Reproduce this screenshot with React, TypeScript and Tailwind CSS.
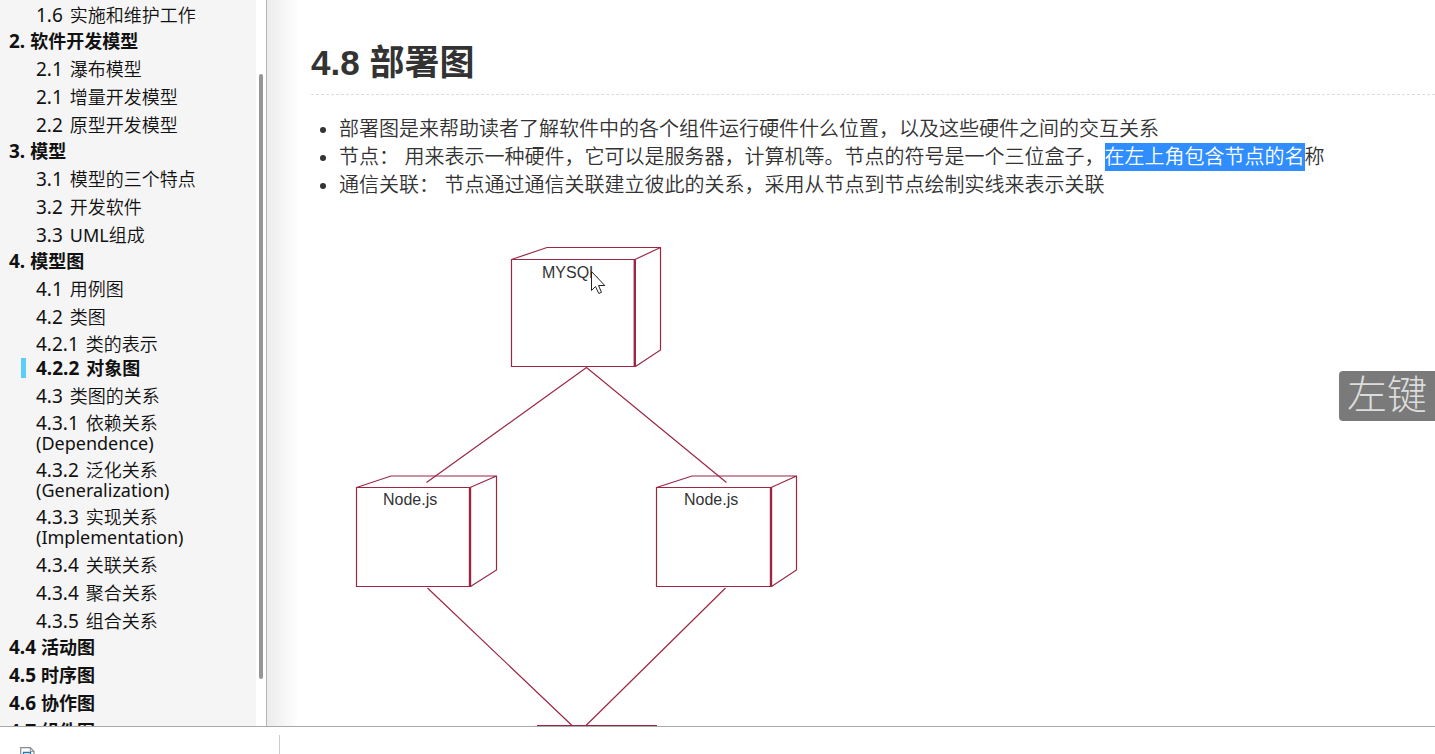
import React from 'react';

type Kind = 'chapter' | 'chapterAfterList' | 'section' | 'topic' | 'active';

interface Entry {
  no: string;
  title: string;
  latin?: string;
  note?: string;
  kind: Kind;
}

const entries: Entry[] = [
  { no: '1.6', title: '实施和维护工作', kind: 'section' },
  { no: '2.', title: '软件开发模型', kind: 'chapterAfterList' },
  { no: '2.1', title: '瀑布模型', kind: 'section' },
  { no: '2.1', title: '增量开发模型', kind: 'section' },
  { no: '2.2', title: '原型开发模型', kind: 'section' },
  { no: '3.', title: '模型', kind: 'chapterAfterList' },
  { no: '3.1', title: '模型的三个特点', kind: 'section' },
  { no: '3.2', title: '开发软件', kind: 'section' },
  { no: '3.3', latin: 'UML', title: '组成', kind: 'section' },
  { no: '4.', title: '模型图', kind: 'chapterAfterList' },
  { no: '4.1', title: '用例图', kind: 'section' },
  { no: '4.2', title: '类图', kind: 'section' },
  { no: '4.2.1', title: '类的表示', kind: 'topic' },
  { no: '4.2.2', title: '对象图', kind: 'active' },
  { no: '4.3', title: '类图的关系', kind: 'section' },
  { no: '4.3.1', title: '依赖关系', note: '(Dependence)', kind: 'topic' },
  { no: '4.3.2', title: '泛化关系', note: '(Generalization)', kind: 'topic' },
  { no: '4.3.3', title: '实现关系', note: '(Implementation)', kind: 'topic' },
  { no: '4.3.4', title: '关联关系', kind: 'section' },
  { no: '4.3.4', title: '聚合关系', kind: 'section' },
  { no: '4.3.5', title: '组合关系', kind: 'section' },
  { no: '4.4', title: '活动图', kind: 'chapterAfterList' },
  { no: '4.5', title: '时序图', kind: 'chapter' },
  { no: '4.6', title: '协作图', kind: 'chapter' },
  { no: '4.7', title: '组件图', kind: 'chapter' },
];

const kindClass: Record<Kind, string> = {
  chapter: 'mt-2 pl-[9px] font-bold',
  chapterAfterList: 'mt-1.5 pl-[9px] font-bold',
  section: 'mt-2 pl-9 font-[350]',
  topic: 'mt-[7px] pl-9 font-[350]',
  active: 'mt-1 ml-[21px] border-l-[5px] border-[#5bcdfa] pl-2.5 font-bold',
};

const numberClass: Record<Kind, string> = {
  chapter: '',
  chapterAfterList: '',
  section: 'mr-0.5 font-normal',
  topic: 'mr-0.5 font-normal',
  active: 'mr-0.5',
};

function Sidebar() {
  return (
    <aside className="flex w-[267px] shrink-0 overflow-hidden border-r border-[#b4b4b4] bg-white">
      <nav aria-label="目录" className="min-w-0 flex-1 bg-[#f5f5f5]">
        <ul className="-mt-[3px] font-['Noto_Sans','Noto_Sans_CJK_SC',sans-serif] text-[18px] leading-5 text-[#111111]">
          {entries.map((e, i) => (
            <li key={i} className={kindClass[e.kind]}>
              <a href="#" className="block">
                <span className={numberClass[e.kind]}>
                  <span className="text-[19px] leading-5">{e.no} </span>
                </span>
                {e.latin && <span className="font-normal">{e.latin}</span>}
                {e.title}
                {e.note && <span className="block font-normal">{e.note}</span>}
              </a>
            </li>
          ))}
        </ul>
      </nav>
      <div className="w-2.5 shrink-0 pt-[74px] pl-[3px]">
        <div className="h-[605px] w-1 rounded-full bg-[#969696]" />
      </div>
    </aside>
  );
}

function Diagram() {
  return (
    <figure className="relative mt-4">
      <svg width="520" height="540" viewBox="0 0 520 540" fill="none" stroke="#9b2743" strokeWidth="1.2">
        <path d="M200.5 44.5H324V151.5H200.5ZM200.5 44.5L236 32.5H349.5V135L324.5 151.5M324 44.5L349.5 32.5" />
        <path d="M323.8 44V152" strokeWidth="2.4" />
        <path d="M45.5 272.5H159V371.5H45.5ZM45.5 272.5L80 261H185.5V355L159.5 371.5M159 272.5L185.5 261" />
        <path d="M159 272V372" strokeWidth="2.4" />
        <path d="M345.5 272.5H460V371.5H345.5ZM345.5 272.5L381 261H485.5V355L460.5 371.5M460 272.5L485.5 261" />
        <path d="M460 272V372" strokeWidth="2.4" />
        <path d="M115.5 267.5L275.5 152.5L415.5 267.5M116.5 373L261 510.5M414.5 373L275 510.5" />
        <path d="M226 510.5H346" />
        <g fill="#333333" stroke="none" className="font-['Liberation_Sans',sans-serif] text-[16px]">
          <text x="231" y="63">MYSQL</text>
          <text x="72" y="290">Node.js</text>
          <text x="373" y="290">Node.js</text>
        </g>
      </svg>
      <svg className="absolute top-[55px] left-[279px]" width="16" height="26" viewBox="0 0 16 26">
        <path d="M1.5 1.5V20.5L5.5 16.5L8.8 23.5L11.5 22.3L8.5 15.5H14.8Z" fill="#fff" stroke="#222" strokeWidth="1" />
      </svg>
    </figure>
  );
}

function Article() {
  return (
    <main className="min-w-0 flex-1 overflow-hidden bg-linear-to-r from-[#ececec] to-white to-[32px] pl-11 font-['Liberation_Sans','Noto_Sans_CJK_SC',sans-serif] text-[#333333]">
      <h1 className="border-b border-dashed border-[#dddddd] pt-[41px] pb-[9px] text-[35px] leading-11 font-bold">
        4.8 部署图
      </h1>
      <ul className="mt-5 list-disc pl-7 text-[20px] leading-7 font-[350] whitespace-nowrap">
        <li>部署图是来帮助读者了解软件中的各个组件运行硬件什么位置，以及这些硬件之间的交互关系</li>
        <li>
          节点： 用来表示一种硬件，它可以是服务器，计算机等。节点的符号是一个三位盒子，
          <mark className="inline-block bg-[#2f8dff] text-white">在左上角包含节点的名</mark>称
        </li>
        <li>通信关联： 节点通过通信关联建立彼此的关系，采用从节点到节点绘制实线来表示关联</li>
      </ul>
      <Diagram />
    </main>
  );
}

export default function App() {
  return (
    <div className="flex h-screen flex-col overflow-hidden bg-white">
      <div className="flex min-h-0 flex-1">
        <Sidebar />
        <Article />
      </div>
      <footer className="flex h-7 shrink-0 overflow-hidden border-t border-[#a9a9a9]">
        <div className="mt-2 w-[280px] border-r border-[#cccccc] pt-3 pl-5">
          <svg width="15" height="18" viewBox="0 0 15 18" fill="none">
            <path d="M.7.7H10.3L14 4.4V17H.7Z" fill="#fff" stroke="#8b8b8b" strokeWidth="1.2" />
            <path d="M10.3.7V4.4H14" stroke="#8b8b8b" />
            <path d="M3.5 5.5H10.5V13H3.5ZM5 8H9" stroke="#2778b5" strokeWidth="1.3" />
          </svg>
        </div>
      </footer>
      <div className="fixed top-[371px] right-0 flex h-[50px] w-24 items-center justify-center rounded-l-sm bg-[#7a7a7a] font-['Liberation_Serif','Noto_Sans_CJK_SC',serif] text-[40px] leading-none font-light text-[#dddddd]">
        左键
      </div>
    </div>
  );
}
